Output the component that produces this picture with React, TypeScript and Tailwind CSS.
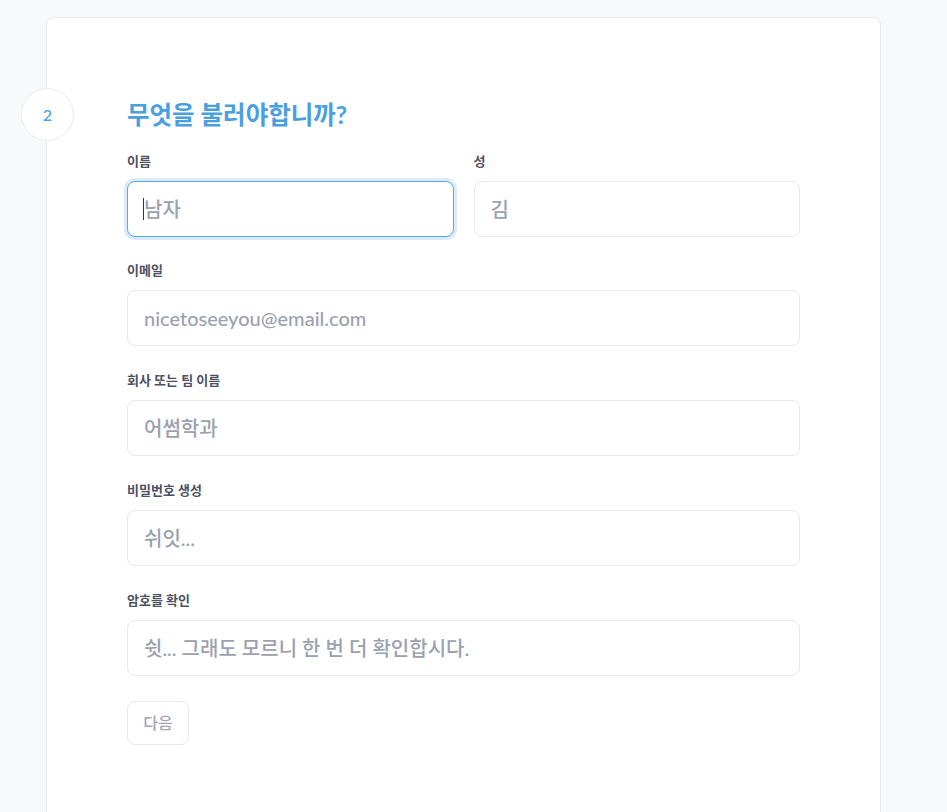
const font = { fontFamily: 'Lato, "Noto Sans CJK KR", sans-serif' };

function Field({ label, placeholder }: { label: string; placeholder: string }) {
  return (
    <div className="flex flex-col">
      <label className="text-[13px] font-bold text-[#4b5162] leading-[18px] mb-[11px]">{label}</label>
      <input
        placeholder={placeholder}
        className="h-[56px] w-full rounded-lg border border-[#e6e8ec] bg-white px-4 text-[20px] font-medium text-[#333] placeholder:text-[#9ba1ae] outline-none"
      />
    </div>
  );
}

export default function App() {
  return (
    <div className="min-h-[812px] bg-[#f8f9fb] pt-[17px] pl-[46px] overflow-hidden" style={font}>
      <div className="relative w-[835px] h-[820px] rounded-lg border border-[#e8e9ec] bg-white pl-[80px] pt-[82px]">
        <div className="absolute left-[-26px] top-[70px] flex h-[53px] w-[53px] items-center justify-center rounded-full border border-[#ececef] bg-white text-[16px] font-medium text-[#4a9fe0]">
          2
        </div>
        <h2 className="text-[24.5px] font-bold leading-[30px] text-[#4a9fe0] mb-[22px]">무엇을 불러야합니까?</h2>

        <div className="flex w-[673px] flex-col gap-[25px]">
          <div className="grid grid-cols-2 gap-5 -mb-px">
            <div className="flex flex-col">
              <label className="text-[13px] font-bold text-[#4b5162] leading-[18px] mb-[11px]">이름</label>
              <div className="relative">
                <input
                  placeholder="남자"
                  className="h-[56px] w-full rounded-lg border border-[#5aa7e8] bg-white px-4 text-[20px] font-medium placeholder:text-[#9ba1ae] outline-none ring-[3px] ring-[#dcebf9]"
                />
                <span className="absolute left-[16px] top-[17px] h-[22px] w-px bg-[#333]" />
              </div>
            </div>
            <Field label="성" placeholder="김" />
          </div>
          <Field label="이메일" placeholder="nicetoseeyou@email.com" />
          <Field label="회사 또는 팀 이름" placeholder="어썸학과" />
          <Field label="비밀번호 생성" placeholder="쉬잇..." />
          <Field label="암호를 확인" placeholder="쉿... 그래도 모르니 한 번 더 확인합시다." />
          <div>
            <button className="h-[44px] w-[62px] rounded-lg border border-[#e6e8ec] bg-white text-[16px] font-medium text-[#a3a8b3]">
              다음
            </button>
          </div>
        </div>
      </div>
    </div>
  );
}
